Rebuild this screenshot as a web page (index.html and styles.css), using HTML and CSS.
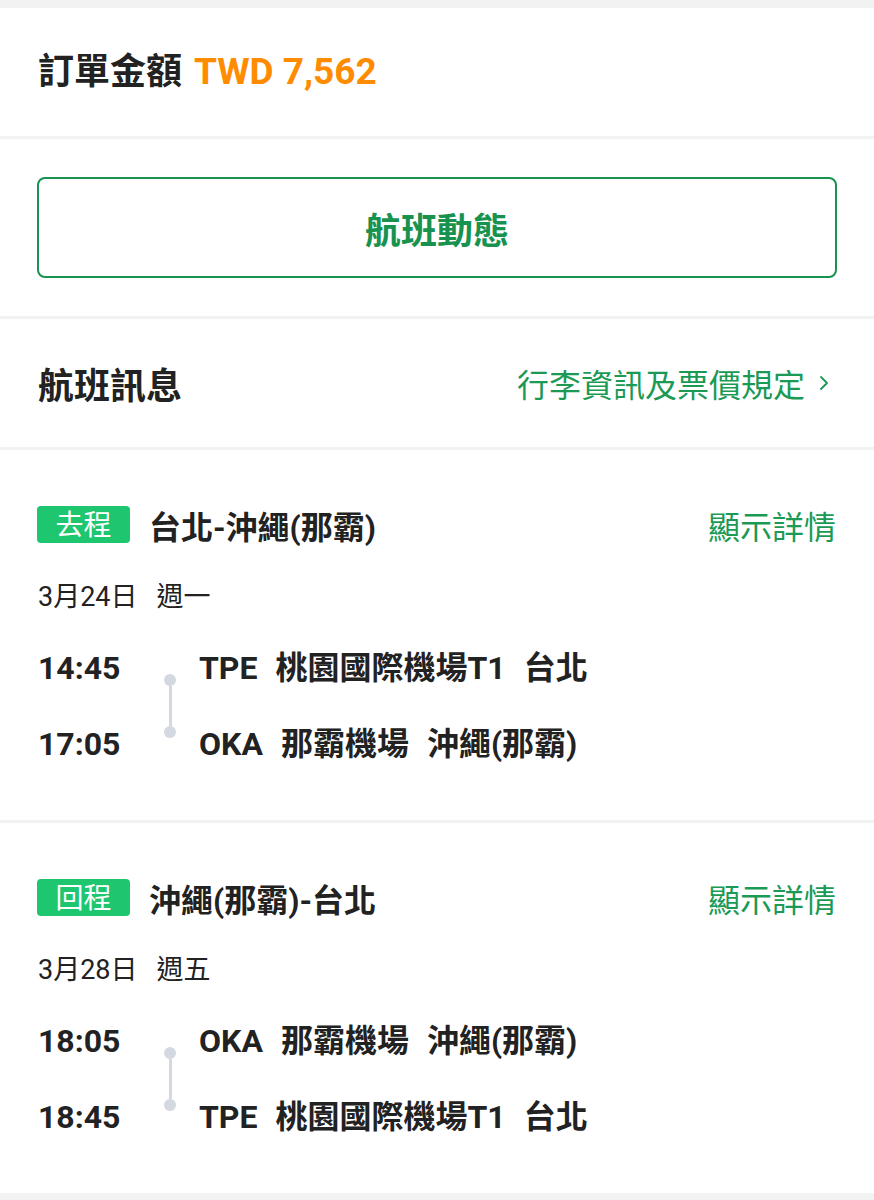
FILE: index.html
```html
<!DOCTYPE html>
<html lang="zh-Hant">
<head>
    <meta charset="UTF-8">
    <meta name="viewport" content="width=device-width, initial-scale=1.0">
    <title>訂單詳情</title>
    <link rel="stylesheet" href="styles.css">
</head>
<body>
    <div class="page">
        <!-- Order total -->
        <section class="card total-card">
            <h1 class="total">訂單金額 <span class="price">TWD 7,562</span></h1>
        </section>

        <!-- Flight status button -->
        <section class="card status-card">
            <button class="status-button" type="button">航班動態</button>
        </section>

        <!-- Flight info header -->
        <section class="card info-card">
            <h2 class="info-title">航班訊息</h2>
            <a class="info-link" href="#">行李資訊及票價規定
                <svg class="chevron" width="10" height="16" viewBox="0 0 10 16"><path d="M2 2l6 6-6 6" fill="none" stroke="currentColor" stroke-width="1.8" stroke-linecap="round" stroke-linejoin="round"/></svg>
            </a>
        </section>

        <!-- Outbound -->
        <section class="card trip-card">
            <div class="trip-head">
                <span class="badge">去程</span>
                <span class="route">台北-沖繩(那霸)</span>
                <a class="detail-link" href="#">顯示詳情</a>
            </div>
            <div class="trip-date">3月24日<span class="weekday">週一</span></div>
            <div class="legs">
                <div class="times">
                    <div>14:45</div>
                    <div>17:05</div>
                </div>
                <div class="track"><span class="dot"></span><span class="line"></span><span class="dot"></span></div>
                <div class="places">
                    <div>TPE<span class="gap">桃園國際機場T1</span><span class="gap">台北</span></div>
                    <div>OKA<span class="gap">那霸機場</span><span class="gap">沖繩(那霸)</span></div>
                </div>
            </div>
        </section>

        <!-- Return -->
        <section class="card trip-card">
            <div class="trip-head">
                <span class="badge">回程</span>
                <span class="route">沖繩(那霸)-台北</span>
                <a class="detail-link" href="#">顯示詳情</a>
            </div>
            <div class="trip-date">3月28日<span class="weekday">週五</span></div>
            <div class="legs">
                <div class="times">
                    <div>18:05</div>
                    <div>18:45</div>
                </div>
                <div class="track"><span class="dot"></span><span class="line"></span><span class="dot"></span></div>
                <div class="places">
                    <div>OKA<span class="gap">那霸機場</span><span class="gap">沖繩(那霸)</span></div>
                    <div>TPE<span class="gap">桃園國際機場T1</span><span class="gap">台北</span></div>
                </div>
            </div>
        </section>
    </div>
</body>
</html>
```

FILE: styles.css
```css
body {
    font-family: 'Roboto', 'Noto Sans CJK TC', sans-serif;
    background-color: #f2f2f2;
    color: #222222;
    margin: 0;
}
.page {
    padding-top: 8px;
    display: flex;
    flex-direction: column;
    gap: 3px;
}
.card {
    background: #ffffff;
    padding: 0 37px 0 38px;
}
.total-card {
    height: 128px;
    display: flex;
    align-items: center;
}
.total {
    font-size: 36px;
    font-weight: 700;
    margin: 0;
    line-height: 40px;
}
.price {
    color: #ff8c00;
    font-size: 37px;
    margin-left: 3px;
}
.status-card {
    padding: 38px 37px 38px 37px;
}
.status-button {
    width: 100%;
    height: 101px;
    background: #ffffff;
    border: 2px solid #17924f;
    border-radius: 8px;
    color: #17924f;
    font-family: inherit;
    font-size: 36px;
    font-weight: 700;
    cursor: pointer;
}
.info-card {
    height: 128px;
    display: flex;
    align-items: center;
    justify-content: space-between;
}
.info-title {
    font-size: 36px;
    font-weight: 700;
    margin: 0;
}
.info-link {
    color: #1a9a55;
    font-size: 32px;
    text-decoration: none;
    display: flex;
    align-items: center;
}
.chevron {
    margin-left: 14px;
    margin-right: 8px;
}
.trip-card {
    padding-top: 56px;
    padding-bottom: 56px;
}
.trip-head {
    display: flex;
    align-items: center;
    height: 37px;
}
.badge {
    background: #1fc670;
    color: #ffffff;
    border-radius: 4px;
    width: 93px;
    height: 37px;
    box-sizing: border-box;
    padding-top: 2px;
    line-height: 35px;
    text-align: center;
    font-size: 28px;
    margin-left: -1px;
}
.route {
    font-size: 32px;
    font-weight: 700;
    margin-left: 19px;
}
.detail-link {
    margin-left: auto;
    color: #1a9a55;
    font-size: 32px;
    text-decoration: none;
    margin-right: 1px;
}
.trip-date {
    font-size: 27px;
    line-height: 36px;
    margin-top: 36px;
}
.weekday {
    margin-left: 19px;
}
.legs {
    display: flex;
    margin-top: 33px;
}
.times, .places {
    display: flex;
    flex-direction: column;
    gap: 36px;
    font-size: 32px;
    font-weight: 700;
    line-height: 40px;
}
.times {
    width: 126px;
}
.track {
    width: 12px;
    height: 64px;
    margin-top: 26px;
    margin-right: 23px;
    display: flex;
    flex-direction: column;
    align-items: center;
}
.dot {
    width: 12px;
    height: 12px;
    border-radius: 50%;
    background: #d3d8e1;
}
.line {
    flex: 1;
    width: 3px;
    background: #d3d8e1;
}
.gap {
    margin-left: 18px;
}
```
